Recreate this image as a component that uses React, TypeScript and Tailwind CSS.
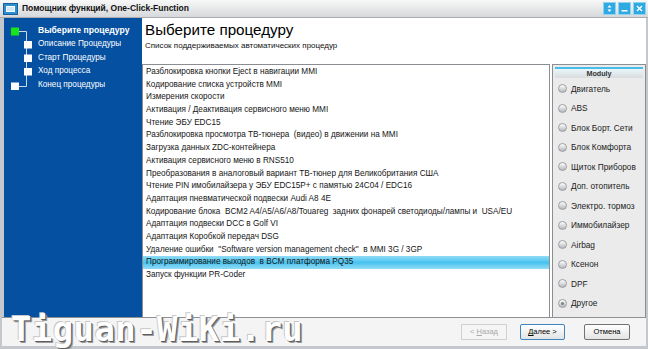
import React from "react";

const items = [
  "Разблокировка кнопки Eject в навигации MMI",
  "Кодирование списка устройств MMI",
  "Измерения скорости",
  "Активация / Деактивация сервисного меню MMI",
  "Чтение ЭБУ EDC15",
  "Разблокировка просмотра ТВ-тюнера  (видео) в движении на MMI",
  "Загрузка данных ZDC-контейнера",
  "Активация сервисного меню в RNS510",
  "Преобразования в аналоговый вариант ТВ-тюнер для Великобритания США",
  "Чтение PIN имобилайзера у ЭБУ EDC15P+ с памятью 24C04 / EDC16",
  "Адаптация пневматической подвески Audi A8 4E",
  "Кодирование блока  BCM2 A4/A5/A6/A8/Touareg  задних фонарей светодиоды/лампы и  USA/EU",
  "Адаптация подвески DCC в Golf VI",
  "Адаптация Коробкой передач DSG",
  "Удаление ошибки  \"Software version management check\"  в MMI 3G / 3GP",
  "Программирование выходов  в BCM платформа PQ35",
  "Запуск функции PR-Coder",
];

const modules = [
  "Двигатель",
  "ABS",
  "Блок Борт. Сети",
  "Блок Комфорта",
  "Щиток Приборов",
  "Доп. отопитель",
  "Электро. тормоз",
  "Иммобилайзер",
  "Airbag",
  "Ксенон",
  "DPF",
  "Другое",
];

const steps = [
  "Выберите процедуру",
  "Описание Процедуры",
  "Старт Процедуры",
  "Ход процесса",
  "Конец процедуры",
];

function TitleButton({ children }: { children: React.ReactNode }) {
  return (
    <div className="w-[13px] h-[13px] bg-[#2fa9e2] border border-[#8fd3f2] flex items-center justify-center">
      <svg width="9" height="9" viewBox="0 0 9 9">{children}</svg>
    </div>
  );
}

export default function App() {
  return (
    <div className="relative w-[648px] h-[349px] overflow-hidden bg-[#c4c8cd] font-['Liberation_Sans',Arial,sans-serif]">
      {/* Title bar */}
      <div className="h-[18px] flex items-center bg-gradient-to-b from-[#f8f8f8] to-[#d6d8db] border-b border-[#a9adb2]">
        <div className="ml-[3px] w-[15px] h-[12px] bg-[#2a8fd0] border border-[#1b5e98] flex items-center justify-center">
          <div className="w-[9px] h-[6px] bg-[#cfe9f8] border border-[#ffffff]" />
        </div>
        <div className="ml-[4px] text-[8.5px] font-bold text-[#111]">
          Помощник функций, One-Click-Function
        </div>
        <div className="ml-auto mr-[2px] flex gap-[2px]">
          <TitleButton>
            <path d="M4.5 1 L2.5 3.5 H6.5 Z M4.5 8 L2.5 5.5 H6.5 Z" fill="#fff" />
          </TitleButton>
          <TitleButton>
            <rect x="1.5" y="6" width="6" height="1.5" fill="#fff" />
          </TitleButton>
          <TitleButton>
            <path d="M2 2 L7 7 M7 2 L2 7" stroke="#fff" strokeWidth="1.4" />
          </TitleButton>
        </div>
      </div>

      {/* Main */}
      <div className="flex h-[299px] pl-[4px] pr-[2px]">
        {/* Left steps panel */}
        <div className="w-[138px] bg-[#0550a0] relative">
          <div className="flex pt-[6px]">
            <svg width="34" height="68" viewBox="0 0 34 68" className="shrink-0">
              <path d="M15 7.5 H22.5 V62.5 H15" stroke="#cfd8e8" strokeWidth="1" fill="none" />
              <rect x="7" y="3.5" width="8" height="8" fill="#19e619" />
              <rect x="20" y="17" width="8" height="7.5" fill="#fff" />
              <rect x="20" y="30.5" width="8" height="7.5" fill="#fff" />
              <rect x="20" y="44" width="8" height="7.5" fill="#fff" />
              <rect x="7" y="58.5" width="8" height="7.5" fill="#fff" />
            </svg>
            <div className="flex flex-col">
              {steps.map((s, i) => (
                <div
                  key={s}
                  className={
                    "h-[13.4px] leading-[13.4px] text-white whitespace-nowrap " +
                    (i === 0 ? "text-[8.6px] font-bold" : "text-[8.2px]")
                  }
                >
                  {s}
                </div>
              ))}
            </div>
          </div>
        </div>

        {/* Right content */}
        <div className="flex-1 bg-white flex flex-col">
          <div className="h-[46px] pl-[3px] pt-[3px]">
            <div className="text-[15.2px] leading-[18px] text-black">Выберите процедуру</div>
            <div className="text-[8px] leading-[10px] mt-[2px] text-[#111]">
              Список поддерживаемых автоматических процедур
            </div>
          </div>
          <div className="flex-1 flex">
            <div className="w-[408px] border-t border-l border-r border-[#8a8e93] pt-[1px]">
              {items.map((t, i) => (
                <div
                  key={i}
                  className={
                    "h-[12.7px] leading-[12.7px] pl-[3px] text-[8.2px] whitespace-pre text-[#151515] " +
                    (i === 15 ? "bg-gradient-to-b from-[#8fdcf6] via-[#45c2ef] to-[#8fdcf6]" : "")
                  }
                >
                  {t}
                </div>
              ))}
            </div>
            <div className="flex-1 ml-[2px] border border-b-0 border-[#8a8e93] bg-[#ebebeb] p-[2px] pb-0">
              <div className="h-[11px] border-t-2 border-[#49bde9] bg-gradient-to-b from-[#e9f6fb] to-[#d9dcdf] text-[7.2px] font-bold leading-[9px] text-center text-[#333]">
                Moduly
              </div>
              <div className="flex flex-col pt-[1px]">
                {modules.map((m, i) => (
                  <div key={m} className="h-[19.5px] flex items-center pl-[3px] gap-[4px]">
                    <div className="w-[9px] h-[9px] rounded-full border border-[#9a9da1] bg-gradient-to-b from-[#ffffff] to-[#b5b8bc] flex items-center justify-center">
                      {i === 11 && <div className="w-[3px] h-[3px] rounded-full bg-[#7c8085]" />}
                    </div>
                    <div className="text-[8.3px] text-[#222] whitespace-nowrap">{m}</div>
                  </div>
                ))}
              </div>
            </div>
          </div>
        </div>
      </div>

      {/* Bottom bar */}
      <div className="h-[29px] mx-[2px] border-t border-[#8d9196] bg-[#f4f4f4] flex items-center justify-end pr-[16px]">
        <div className="w-[46px] h-[16px] border border-[#cfd1d4] bg-[#f5f5f5] text-[7.5px] text-[#a8a8a8] flex items-center justify-center">
          &lt;&nbsp;<span className="underline">Н</span>азад
        </div>
        <div className="ml-[13px] w-[45px] h-[16px] border-[1.5px] border-[#3f83bf] rounded-[2px] bg-gradient-to-b from-[#ffffff] to-[#e3e3e3] text-[7.5px] text-black flex items-center justify-center">
          <span className="underline">Д</span>алее &gt;
        </div>
        <div className="ml-[19px] w-[46px] h-[16px] border border-[#6f7378] rounded-[2px] bg-gradient-to-b from-[#ffffff] to-[#e3e3e3] text-[7.5px] text-black flex items-center justify-center">
          Отмена
        </div>
      </div>

      {/* Watermark */}
      <div className="absolute left-[11px] top-[310px] text-[34px] leading-[38px] font-bold text-white tracking-[0.4px] font-['DejaVu_Sans_Mono',monospace] [text-shadow:1px_1px_0_#5e5e5e,2px_2px_0_#999999,-1px_-1px_0_#c8c8c8]">
        Tiguan-WiKi.ru
      </div>
    </div>
  );
}
